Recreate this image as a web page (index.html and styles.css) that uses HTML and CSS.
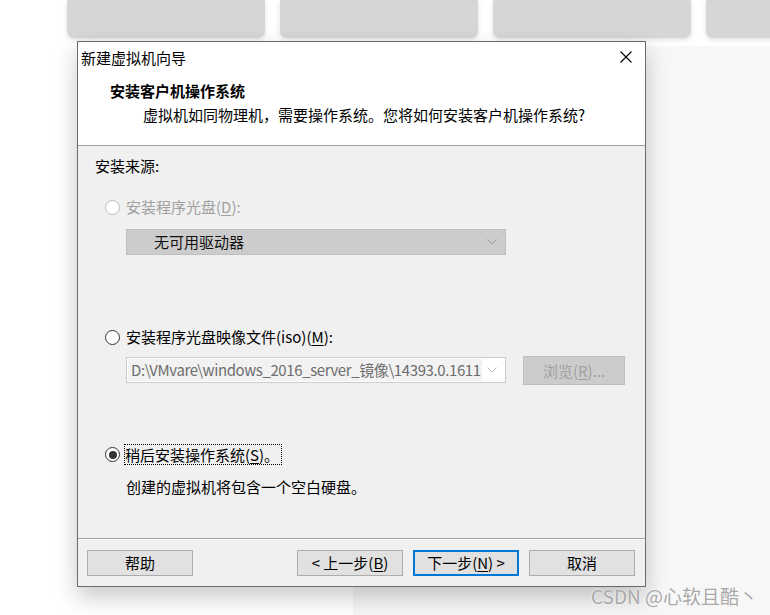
FILE: index.html
```html
<!DOCTYPE html>
<html lang="zh-CN">
<head>
<meta charset="utf-8">
<title>新建虚拟机向导</title>
<link rel="stylesheet" href="styles.css">
</head>
<body>
<div class="desktop">
  <div class="cards">
    <div class="card"></div>
    <div class="card"></div>
    <div class="card"></div>
    <div class="card"></div>
  </div>
  <div class="backpanel"></div>

  <div class="dialog">
    <div class="header">
      <div class="titlebar">
        <span class="title">新建虚拟机向导</span>
        <svg class="close" width="12" height="12" viewBox="0 0 12 12"><path d="M0.5 0.5 L11.5 11.5 M11.5 0.5 L0.5 11.5" stroke="#000" stroke-width="1.1" fill="none"/></svg>
      </div>
      <div class="heading">安装客户机操作系统</div>
      <div class="subheading">虚拟机如同物理机，需要操作系统。您将如何安装客户机操作系统?</div>
    </div>

    <div class="body">
      <div class="section-label">安装来源:</div>

      <div class="radio-row r1 disabled">
        <span class="radio"></span>
        <span class="rlabel">安装程序光盘(<u>D</u>):</span>
      </div>
      <div class="combo combo-disabled c1">
        <span class="combo-text">无可用驱动器</span>
        <svg class="chev" width="10" height="6" viewBox="0 0 10 6"><polyline points="0.5,0.5 5,5 9.5,0.5" fill="none" stroke="#9a9a9a" stroke-width="1"/></svg>
      </div>

      <div class="radio-row r2">
        <span class="radio"></span>
        <span class="rlabel">安装程序光盘映像文件(iso)(<u>M</u>):</span>
      </div>
      <div class="iso-row">
        <div class="combo combo-iso">
          <span class="iso-text">D:\VMvare\windows_2016_server_镜像\14393.0.1611</span>
          <svg class="chev" width="10" height="6" viewBox="0 0 10 6"><polyline points="0.5,0.5 5,5 9.5,0.5" fill="none" stroke="#c4c4c4" stroke-width="1"/></svg>
        </div>
        <div class="btn btn-disabled browse">浏览(<u>R</u>)...</div>
      </div>

      <div class="radio-row r3">
        <span class="radio checked"></span>
        <span class="rlabel focus">稍后安装操作系统(<u>S</u>)。</span>
      </div>
      <div class="desc">创建的虚拟机将包含一个空白硬盘。</div>
    </div>

    <div class="footer">
      <div class="btn help">帮助</div>
      <div class="btn">&lt; 上一步(<u>B</u>)</div>
      <div class="btn primary">下一步(<u>N</u>) &gt;</div>
      <div class="btn">取消</div>
    </div>
  </div>

  <div class="watermark">CSDN @心软且酷丶</div>
</div>
</body>
</html>
```
FILE: styles.css
```css
* { box-sizing: border-box; }
html, body { margin: 0; padding: 0; }
body {
  background: #ffffff;
  font-family: "Noto Sans CJK SC", "Noto Sans", sans-serif;
  font-size: 15px;
  color: #000;
}
.desktop {
  position: relative;
  width: 770px;
  height: 615px;
  overflow: hidden;
}
.cards {
  display: flex;
  gap: 15px;
  padding-left: 67px;
}
.card {
  flex: 0 0 198px;
  height: 38px;
  background: #d6d6d6;
  border-radius: 0 0 7px 7px;
  box-shadow: 0 2px 5px rgba(0,0,0,0.12);
}
.backpanel {
  margin: 8px 0 0 353px;
  height: 570px;
  background: #f7f7f7;
}

/* dialog window */
.dialog {
  position: absolute;
  left: 77px;
  top: 41px;
  width: 569px;
  height: 546px;
  border: 1px solid #6b6b6b;
  background: #f0f0f0;
  box-shadow: 0 10px 22px rgba(0,0,0,0.22);
  display: flex;
  flex-direction: column;
}
.header {
  height: 104px;
  background: #ffffff;
  border-bottom: 1px solid #a0a0a0;
  flex: none;
}
.titlebar {
  height: 32px;
  display: flex;
  align-items: center;
  justify-content: space-between;
  padding: 0 13px 0 3px;
}
.title { line-height: 20px; color: #000; }
.close { display: block; margin-top: -2px; }
.heading {
  margin-top: 7px;
  padding-left: 32px;
  font-weight: bold;
  line-height: 20px;
}
.subheading {
  margin-top: 4px;
  padding-left: 65px;
  line-height: 20px;
}

.body {
  height: 393px;
  flex: none;
  border-bottom: 1px solid #a0a0a0;
  padding-top: 10px;
}
.section-label {
  padding-left: 17px;
  line-height: 20px;
}
.radio-row {
  display: flex;
  align-items: center;
  padding-left: 27px;
  height: 20px;
}
.r1 { margin-top: 21px; }
.r2 { margin-top: 72px; }
.r3 { margin-top: 59px; height: 21px; }
.radio {
  width: 15px;
  height: 15px;
  border-radius: 50%;
  border: 1px solid #333333;
  background: #ffffff;
  margin-right: 6px;
  flex: none;
  display: flex;
  align-items: center;
  justify-content: center;
}
.disabled .radio { border-color: #bcbcbc; }
.disabled .rlabel { color: #a0a0a0; }
.radio.checked::after {
  content: "";
  width: 8px;
  height: 8px;
  border-radius: 50%;
  background: #333333;
}
.rlabel { line-height: 20px; white-space: nowrap; }
.rlabel u { text-underline-offset: 2px; }
.focus {
  outline: 1px dotted #000;
  outline-offset: 0;
  padding: 0 2px 0 0;
  margin-left: -1px;
  line-height: 19px;
}

.combo {
  display: flex;
  align-items: center;
  justify-content: space-between;
  width: 380px;
  height: 26px;
  margin-left: 48px;
  padding-right: 8px;
}
.c1 { margin-top: 12px; }
.combo-disabled {
  background: #cccccc;
  border: 1px solid #c0c0c0;
}
.combo-text { padding-left: 27px; color: #111; line-height: 20px; }
.iso-row {
  display: flex;
  align-items: flex-start;
  margin-top: 9px;
  padding-left: 48px;
  gap: 17px;
}
.combo-iso {
  margin: 1px 0 0 0;
  background: #ffffff;
  border: 1px solid #cccccc;
  padding-left: 1px;
  flex: none;
}
.iso-text {
  display: block;
  flex: none;
  background: #f2f2f2;
  color: #6d6d6d;
  line-height: 22px;
  padding: 0 1px 0 3px;
  white-space: nowrap;
  letter-spacing: -0.4px;
}
.chev { display: block; flex: none; }

.desc {
  margin-top: 12px;
  padding-left: 48px;
  line-height: 20px;
}

.btn {
  width: 106px;
  height: 26px;
  background: #e1e1e1;
  border: 1px solid #adadad;
  display: flex;
  align-items: center;
  justify-content: center;
  line-height: 20px;
  white-space: nowrap;
  flex: none;
}
.btn u { text-underline-offset: 2px; }
.btn-disabled {
  width: 102px;
  height: 29px;
  background: #cccccc;
  border-color: #bfbfbf;
  color: #a0a0a0;
}
.primary { border: 2px solid #0078d7; }

.footer {
  flex: 1;
  border-top: 1px solid #ffffff;
  display: flex;
  gap: 10px;
  padding: 10px 10px 0 9px;
}
.help { margin-right: auto; }

.watermark {
  position: absolute;
  left: 591px;
  top: 584px;
  font-size: 19px;
  line-height: 24px;
  color: #a9a9a9;
  text-shadow: 0 0 2px #ffffff;
  white-space: nowrap;
}
```
